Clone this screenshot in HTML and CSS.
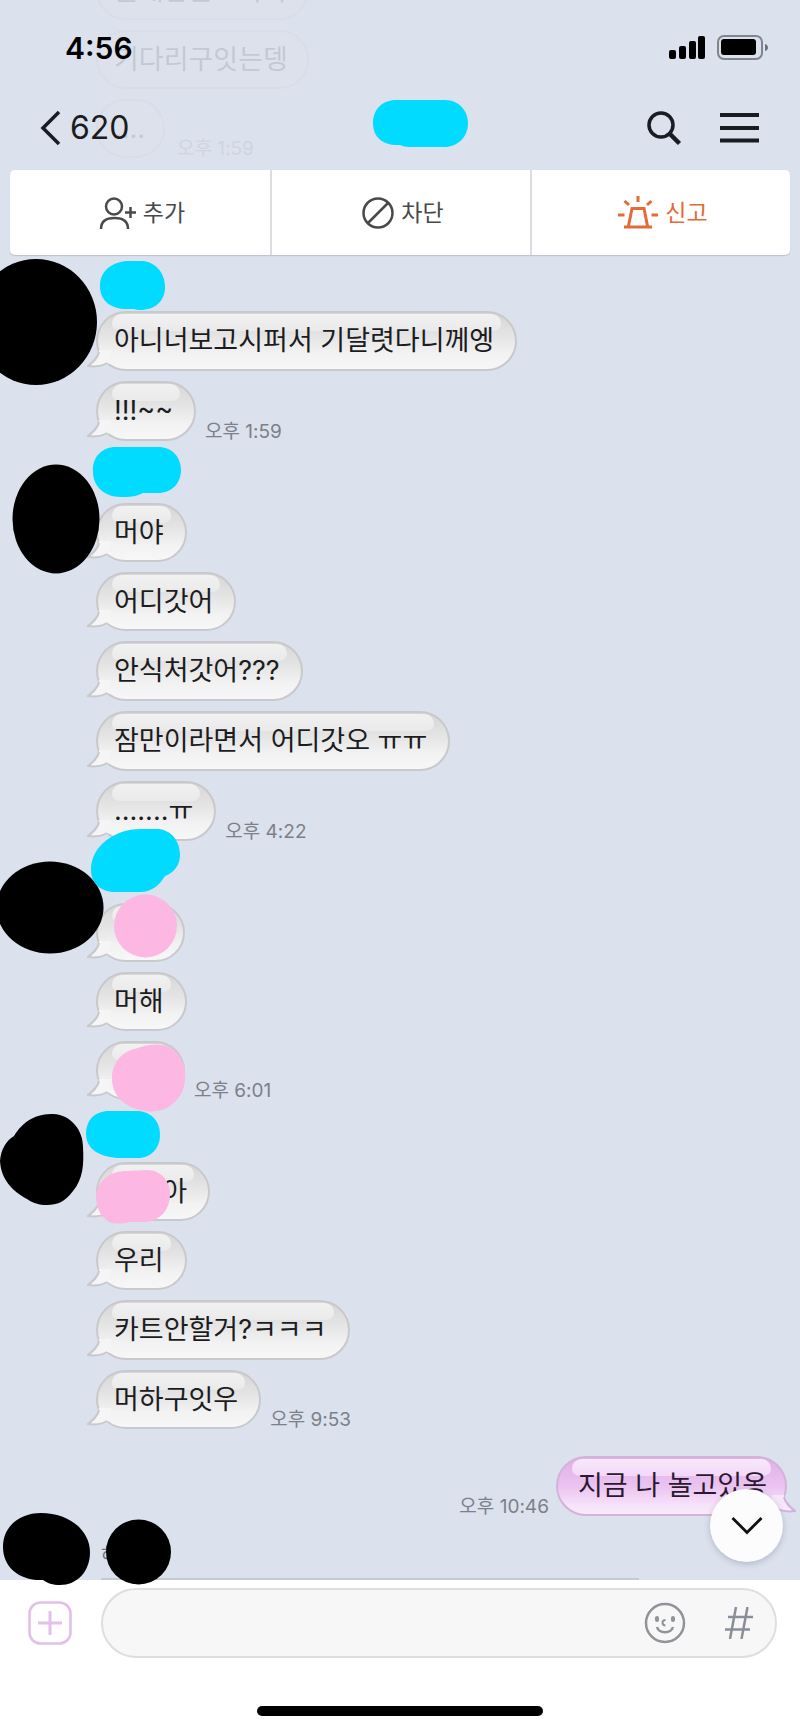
FILE: index.html
```html
<!DOCTYPE html>
<html lang="ko">
<head>
<meta charset="utf-8">
<meta name="viewport" content="width=device-width, initial-scale=1">
<title>채팅</title>
<link rel="stylesheet" href="styles.css">
</head>
<body>
<svg width="0" height="0" class="defs" aria-hidden="true">
  <defs>
    <symbol id="tail" viewBox="0 0 24 20">
      <path class="tail-fill" d="M12 0C12 7 6 12 1 16C8 17 15 16 20 13L24 14V0Z"/>
      <path class="tail-line" d="M12 2C11 8 6 12 1 16C8 17 15 16 20 13"/>
    </symbol>
  </defs>
</svg>
<div class="app">
  <div class="ghost" aria-hidden="true">
    <div class="ghost-bubble">올대답는느아아</div>
    <div class="ghost-bubble">기다리구잇는뎅</div>
    <div class="ghost-row"><div class="ghost-bubble ghost-small">....</div><span class="time">오후 1:59</span></div>
  </div>

  <header class="header">
    <div class="status">
      <span class="clock">4:56</span>
      <svg width="100" height="26" viewBox="0 0 100 26" aria-hidden="true">
        <rect x="0" y="15" width="7" height="9" rx="2"/>
        <rect x="10" y="11" width="7" height="13" rx="2"/>
        <rect x="20" y="6" width="7" height="18" rx="2"/>
        <rect x="29" y="1" width="7" height="23" rx="2"/>
        <rect x="49" y="1" width="44" height="23" rx="6" fill="none" stroke="#80858d" stroke-width="2"/>
        <rect x="52" y="4" width="35" height="16" rx="3"/>
        <path d="M96 9q3 1 3 3.500t-3 3.500z" fill="#6f747c"/>
      </svg>
    </div>
    <nav class="nav">
      <button class="back" type="button" aria-label="뒤로">
        <svg width="21" height="36" viewBox="0 0 21 36"><path d="M19 2L3 18L19 34" fill="none" stroke="#191c20" stroke-width="3.500"/></svg>
        <span>620</span>
      </button>
      <svg class="title" width="96" height="48" viewBox="0 0 96 48" aria-hidden="true"><path class="cyan" d="M23 0H72C86 0 95 11 95 23C95 37 85 47 71 47H36Q31 47 27 45C11 46 0 38 0 23C0 9 10 0 23 0Z"/></svg>
      <div class="tools">
        <button type="button" aria-label="검색">
          <svg width="36" height="36" viewBox="0 0 36 36" fill="none" stroke="#191c20"><circle cx="15" cy="15" r="12" stroke-width="3.500"/><path d="M23 23L33.500 33.500" stroke-width="4.500"/></svg>
        </button>
        <button type="button" aria-label="메뉴">
          <svg width="39" height="30" viewBox="0 0 39 30" stroke="#191c20" stroke-width="4"><path d="M0 2H39M0 15H39M0 27.500H39"/></svg>
        </button>
      </div>
    </nav>
    <div class="actions">
      <button type="button">
        <svg width="37" height="32" viewBox="0 0 37 32" fill="none" stroke="#48494b" stroke-width="2.500"><circle cx="15" cy="9.500" r="8"/><path d="M2 32C2 24 7 21 15.500 21S29 24 29 32M26 15.500H37M31.500 10V21"/></svg>
        추가
      </button>
      <button type="button">
        <svg width="32" height="32" viewBox="0 0 32 32" fill="none" stroke="#48494b" stroke-width="2.500"><circle cx="16" cy="16" r="14.500"/><path d="M6 26L26 6"/></svg>
        차단
      </button>
      <button class="report" type="button">
        <svg width="40" height="34" viewBox="0 0 40 34" fill="none" stroke="#e56a35" stroke-width="3"><path d="M6 31H34M10.500 30L14 12.500H26L29.500 30M20 0V6M6.500 5L11 9M33.500 5L29 9M0 19H6.500M33.500 19H40"/></svg>
        신고
      </button>
    </div>
  </header>

  <main class="chat">
    <section class="group first">
      <div class="bubble latin"><svg class="tail"><use href="#tail"/></svg>아니너보고시퍼서 기달렷다니께엥</div>
      <div class="row"><div class="bubble latin"><svg class="tail"><use href="#tail"/></svg>!!!~~</div><span class="time">오후 1:59</span></div>
      <svg class="marks" viewBox="0 255 220 300" aria-hidden="true">
        <ellipse cx="36" cy="322" rx="61" ry="63"/>
        <path class="cyan" d="M100 286C100 271 112 262 127 261H142C156 262 165 273 165 287C165 301 155 310 140 310Q136 310 134 309H124C109 308 100 299 100 286Z"/>
      </svg>
    </section>

    <section class="group">
      <div class="bubble"><svg class="tail"><use href="#tail"/></svg>머야</div>
      <div class="bubble"><svg class="tail"><use href="#tail"/></svg>어디갓어</div>
      <div class="bubble latin"><svg class="tail"><use href="#tail"/></svg>안식처갓어???</div>
      <div class="bubble latin"><svg class="tail"><use href="#tail"/></svg>잠만이라면서 어디갓오 ㅠㅠ</div>
      <div class="row"><div class="bubble latin"><svg class="tail"><use href="#tail"/></svg>.......ㅠ</div><span class="time">오후 4:22</span></div>
      <svg class="marks" viewBox="0 441 220 300" aria-hidden="true">
        <ellipse cx="56" cy="519" rx="43.500" ry="54.500"/>
        <path class="cyan" d="M116 447H158C172 447 181 457 181 470C181 483 172 493 158 493H143C136 497 128 497 121 497C104 497 93 486 93 472C92 457 102 447 116 447Z"/>
      </svg>
    </section>

    <section class="group">
      <div class="bubble"><svg class="tail"><use href="#tail"/></svg></div>
      <div class="bubble"><svg class="tail"><use href="#tail"/></svg>머해</div>
      <div class="row"><div class="bubble"><svg class="tail"><use href="#tail"/></svg></div><span class="time">오후 6:01</span></div>
      <svg class="marks" viewBox="0 841 220 300" aria-hidden="true">
        <ellipse cx="50" cy="907.500" rx="53.500" ry="46"/>
        <path class="cyan" d="M91 870C91 846 115 829 140 829H158C172 830 180 842 180 855C180 866 173 873 165 876C159 886 151 892 140 892H115C100 892 91 882 91 870Z"/>
        <circle class="pink" cx="145.500" cy="926" r="31.500"/>
        <path class="pink" d="M112 1078C112 1063 122 1051 138 1048C150 1043 166 1043 175 1051C183 1058 186 1068 185 1080C184 1096 172 1108 158 1111C143 1113 127 1108 118 1097C114 1091 112 1086 112 1078Z"/>
      </svg>
    </section>

    <section class="group">
      <div class="bubble masked"><svg class="tail"><use href="#tail"/></svg>아</div>
      <div class="bubble"><svg class="tail"><use href="#tail"/></svg>우리</div>
      <div class="bubble latin"><svg class="tail"><use href="#tail"/></svg>카트안할거?ㅋㅋㅋ</div>
      <div class="row"><div class="bubble"><svg class="tail"><use href="#tail"/></svg>머하구잇우</div><span class="time">오후 9:53</span></div>
      <svg class="marks" viewBox="0 1100 220 300" aria-hidden="true">
        <path d="M0 1161C1 1149 6 1141 14 1136C18 1129 24 1123 31 1119C38 1115 46 1114 53 1114C72 1115 83 1131 83 1147C84 1165 83 1179 73 1191C65 1202 57 1205 47 1205C39 1205 33 1203 27 1199C12 1191 1 1179 0 1161Z"/>
        <path class="cyan" d="M109 1111H138C152 1112 160 1122 160 1135C160 1148 151 1158 138 1158H121C100 1158 86 1149 86 1134C86 1120 95 1111 109 1111Z"/>
        <path class="pink" d="M96 1196C97 1181 110 1171 127 1171L147 1170C161 1170 170 1181 170 1194C170 1210 160 1221 145 1222H130C122 1224 114 1224 109 1222C100 1216 96 1207 96 1196Z"/>
      </svg>
    </section>

    <div class="row mine">
      <span class="time">오후 10:46</span>
      <div class="bubble latin"><svg class="tail"><use href="#tail"/></svg>지금 나 놀고있옹</div>
    </div>

    <section class="next">
      <span class="name">하</span>
      <span class="edge"></span>
      <svg class="marks" viewBox="0 1516 220 300" aria-hidden="true">
        <path d="M3 1547C3 1526 20 1513 41 1513C70 1513 90 1531 90 1552C90 1572 77 1585 60 1585C53 1585 47 1583 43 1580C19 1581 3 1567 3 1547Z"/>
        <circle cx="138.500" cy="1552" r="32.500"/>
      </svg>
    </section>

    <button class="down" type="button" aria-label="맨 아래로">
      <svg width="32" height="20" viewBox="0 0 32 20"><path d="M1.500 2L16 16.500L30.500 2" fill="none" stroke="#111" stroke-width="2.800"/></svg>
    </button>
  </main>

  <footer class="footer">
    <div class="compose">
      <button type="button" aria-label="첨부">
        <svg width="44" height="44" viewBox="0 0 44 44" fill="none" stroke="#e2c0ea" stroke-width="2.600"><rect x="1.500" y="1.500" width="41" height="41" rx="11"/><path d="M10 22H34M22 10V34" stroke-width="3"/></svg>
      </button>
      <div class="field">
        <input type="text" aria-label="메시지 입력">
        <button type="button" aria-label="이모티콘">
          <svg width="42" height="42" viewBox="0 0 42 42" fill="none" stroke="#909399" stroke-width="2.500"><circle cx="21" cy="21" r="19"/><rect x="11" y="14" width="4" height="6" rx="2" fill="#909399" stroke="none"/><rect x="27" y="14" width="4" height="6" rx="2" fill="#909399" stroke="none"/><path d="M21.500 18C19.500 18 18.500 19 18.500 20.500S19.500 23.500 21.500 23.500" stroke-width="2"/><path d="M13 25C15 32 27 32 29 25"/></svg>
        </button>
        <button type="button" aria-label="샵검색">
          <svg width="28" height="32" viewBox="0 0 28 32" fill="none" stroke="#8a8e98" stroke-width="2.500"><path d="M11 0L5 32M22.500 0L16.500 32M3 10H28M0 22.500H25"/></svg>
        </button>
      </div>
    </div>
    <div class="home"></div>
  </footer>
</div>
</body>
</html>
```

FILE: styles.css
```css
* { box-sizing: border-box; }
body {
  margin: 0;
  background: #dbe1ed;
  font-family: "Inter", "Noto Sans CJK KR", sans-serif;
  color: #1c1c1e;
}
button {
  padding: 0;
  border: 0;
  background: none;
  color: inherit;
  font: inherit;
  display: flex;
  align-items: center;
}
svg { display: block; flex: none; }
.defs { position: absolute; }
.app {
  position: relative;
  min-height: 100vh;
  display: flex;
  flex-direction: column;
  overflow: hidden;
}
.cyan { fill: #00dbff; }
.pink { fill: #fdb7e3; }

/* faded messages scrolled beneath the header */
.ghost {
  position: absolute;
  top: -39px;
  left: 96px;
  display: flex;
  flex-direction: column;
  align-items: flex-start;
  gap: 10px;
  opacity: 0.12;
}
.ghost-bubble {
  height: 59px;
  padding: 0 19px 0 16px;
  border: 2px solid #c4c4c8;
  border-radius: 30px;
  background: #e8e8ea;
  font: 27px/55px "Inter", "Noto Sans CJK KR", sans-serif;
}
.ghost-row { display: flex; align-items: flex-end; gap: 12px; }
.ghost-small { width: 69px; }

.header { position: relative; }
.status {
  height: 90px;
  padding: 6px 31px 0 65px;
  display: flex;
  align-items: center;
  justify-content: space-between;
}
.clock { font-size: 30px; font-weight: 600; line-height: 36px; color: #000; }
.nav {
  height: 80px;
  padding: 0 41px 4px 40px;
  display: grid;
  grid-template-columns: 1fr auto 1fr;
  align-items: center;
}
.title { margin: 0 0 8px 43px; }
.back { gap: 9px; font-size: 32px; line-height: 40px; justify-self: start; }
.tools { display: flex; align-items: center; justify-content: flex-end; gap: 38px; }
.actions {
  margin: 0 10px;
  height: 85px;
  display: grid;
  grid-template-columns: repeat(3, 1fr);
  background: #fff;
  border-radius: 5px;
  box-shadow: 0 1px 1px #bcc1ca;
}
.actions button {
  justify-content: center;
  gap: 7px;
  padding-left: 4px;
  font: 23px/32px "Inter", "Noto Sans CJK KR", sans-serif;
  color: #48494b;
}
.actions button + button { border-left: 2px solid #dcdde0; }
.actions .report { color: #e56a35; }

.chat { flex: 1; position: relative; display: flex; flex-direction: column; }
.group {
  position: relative;
  padding: 62px 20px 0 96px;
  display: flex;
  flex-direction: column;
  align-items: flex-start;
  gap: 10px;
}
.first { padding-top: 56px; }
.row { display: flex; align-items: flex-end; gap: 9px; }
.marks {
  position: absolute;
  top: 0;
  left: 0;
  width: 220px;
  height: 300px;
  overflow: visible;
  z-index: 1;
  pointer-events: none;
}
.bubble {
  --edge: #c9c9cc;
  --tail: #f5f5f5;
  position: relative;
  min-width: 89px;
  height: 59px;
  padding: 1px 21px 0 16px;
  border: 2px solid var(--edge);
  border-radius: 30px;
  background: linear-gradient(#d6d6d7, #e4e4e4 40%, #f2f2f2 72%, #f7f7f7);
  font: 27px/54px "Inter", "Noto Sans CJK KR", sans-serif;
  white-space: nowrap;
  isolation: isolate;
}
.latin { height: 60px; }
.masked { min-width: 114px; text-align: right; }
.bubble::before {
  content: "";
  position: absolute;
  z-index: -1;
  top: 1px;
  left: 14px;
  right: 14px;
  height: 17px;
  border-radius: 12px 12px 9px 9px;
  background: linear-gradient(#f1f1f1, #eaeaea);
}
.tail {
  position: absolute;
  z-index: -1;
  left: -11px;
  bottom: -1px;
  width: 24px;
  height: 20px;
}
.tail-fill { fill: var(--tail); }
.tail-line { fill: none; stroke: var(--edge); stroke-width: 2; }
.time { font-size: 19px; line-height: 18px; color: #7b8089; white-space: nowrap; }

.mine { margin: 27px 13px 0 20px; justify-content: flex-end; gap: 7px; }
.mine .bubble {
  --edge: #d3b2dc;
  --tail: #f8e6fa;
  padding: 1px 18px 0 20px;
  background: linear-gradient(#e0b0e7, #eac3f0 50%, #f7e3fa 85%, #f9e9fb);
  color: #2c1830;
}
.mine .bubble::before { background: linear-gradient(#f8e8fb, #f3d8f7); }
.mine .tail { left: auto; right: -11px; transform: scaleX(-1); }

.next { flex: 1; position: relative; padding: 28px 0 0 101px; display: flex; flex-direction: column; justify-content: space-between; }
.name { font-size: 19px; line-height: 24px; color: #6d727b; }
.edge { height: 2px; width: 538px; background: #c6cad2; }
.down {
  position: absolute;
  right: 17px;
  bottom: 18px;
  width: 73px;
  height: 73px;
  justify-content: center;
  border-radius: 50%;
  background: #fcfcfd;
  box-shadow: 0 2px 6px rgba(60, 65, 90, 0.25);
}

.footer { background: #fff; padding: 8px 0 15px; }
.compose { display: flex; align-items: center; gap: 29px; padding: 0 23px 0 28px; }
.field {
  flex: 1;
  height: 70px;
  padding: 0 22px;
  display: flex;
  align-items: center;
  gap: 39px;
  border: 2px solid #dedee0;
  border-radius: 35px;
  background: #f7f7f7;
}
.field input { flex: 1; min-width: 0; border: 0; outline: 0; background: none; font: 27px/40px "Inter", "Noto Sans CJK KR", sans-serif; }
.home { width: 286px; height: 10px; margin: 48px auto 0; border-radius: 5px; background: #000; }
```
